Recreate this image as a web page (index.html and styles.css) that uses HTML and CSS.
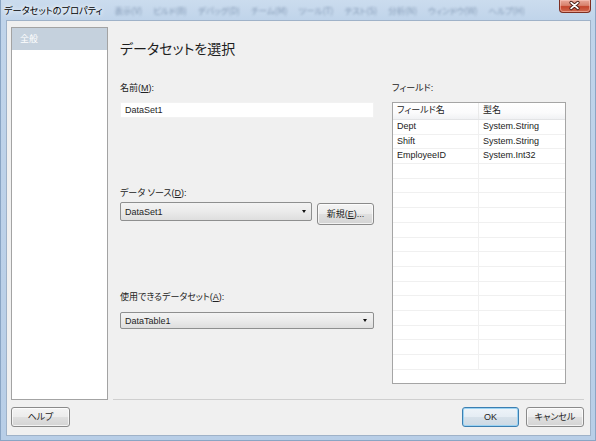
FILE: index.html
```html
<!DOCTYPE html>
<html lang="ja">
<head>
<meta charset="utf-8">
<title>データセットのプロパティ</title>
<link rel="stylesheet" href="styles.css">
</head>
<body>
<div class="window">
  <div class="titlebar">
    <span class="title">データセットのプロパティ</span>
    <div class="ghost-menu">
      <span>表示(V)</span><span>ビルド(B)</span><span>デバッグ(D)</span><span>チーム(M)</span><span>ツール(T)</span><span>テスト(S)</span><span>分析(N)</span><span>ウィンドウ(W)</span><span>ヘルプ(H)</span>
    </div>
    <div class="close">
      <svg width="32" height="13" viewBox="0 0 32 13">
        <path d="M12.5 3.5 L19.5 9.5 M19.5 3.5 L12.5 9.5" stroke="#4a1c14" stroke-width="3.6" stroke-linecap="round" fill="none"/>
        <path d="M12.5 3.5 L19.5 9.5 M19.5 3.5 L12.5 9.5" stroke="#ffffff" stroke-width="1.8" stroke-linecap="round" fill="none"/>
      </svg>
    </div>
  </div>
  <div class="client">
    <div class="main">
      <div class="nav">
        <div class="nav-item selected">全般</div>
      </div>
      <div class="content">
        <h1 class="heading">データセットを選択</h1>
        <div class="columns">
          <div class="form">
            <label class="label">名前(<u>M</u>):</label>
            <div class="textbox">DataSet1</div>
            <label class="label label-source">データ ソース(<u>D</u>):</label>
            <div class="combo-row">
              <div class="combo combo-source"><span class="combo-text">DataSet1</span><span class="arrow"></span></div>
              <button class="btn btn-new">新規(<u>E</u>)...</button>
            </div>
            <label class="label label-avail">使用できるデータセット(<u>A</u>):</label>
            <div class="combo combo-avail"><span class="combo-text">DataTable1</span><span class="arrow"></span></div>
          </div>
          <div class="fields">
            <label class="label">フィールド:</label>
            <div class="listbox">
              <div class="lrow lhead"><div class="cell">フィールド名</div><div class="cell">型名</div></div>
              <div class="lrow"><div class="cell">Dept</div><div class="cell">System.String</div></div>
              <div class="lrow"><div class="cell">Shift</div><div class="cell">System.String</div></div>
              <div class="lrow"><div class="cell">EmployeeID</div><div class="cell">System.Int32</div></div>
              <div class="lrow"><div class="cell"></div><div class="cell"></div></div>
              <div class="lrow"><div class="cell"></div><div class="cell"></div></div>
              <div class="lrow"><div class="cell"></div><div class="cell"></div></div>
              <div class="lrow"><div class="cell"></div><div class="cell"></div></div>
              <div class="lrow"><div class="cell"></div><div class="cell"></div></div>
              <div class="lrow"><div class="cell"></div><div class="cell"></div></div>
              <div class="lrow"><div class="cell"></div><div class="cell"></div></div>
              <div class="lrow"><div class="cell"></div><div class="cell"></div></div>
              <div class="lrow"><div class="cell"></div><div class="cell"></div></div>
              <div class="lrow"><div class="cell"></div><div class="cell"></div></div>
              <div class="lrow"><div class="cell"></div><div class="cell"></div></div>
              <div class="lrow"><div class="cell"></div><div class="cell"></div></div>
              <div class="lrow"><div class="cell"></div><div class="cell"></div></div>
              <div class="lrow"><div class="cell"></div><div class="cell"></div></div>
            </div>
          </div>
        </div>
      </div>
    </div>
    <div class="footer">
      <button class="btn btn-help">ヘルプ</button>
      <div class="spacer"></div>
      <button class="btn btn-ok">OK</button>
      <button class="btn btn-cancel">キャンセル</button>
    </div>
  </div>
</div>
</body>
</html>
```

FILE: styles.css
```css
* { box-sizing: border-box; }
html, body { margin: 0; padding: 0; }
body {
  width: 596px;
  height: 441px;
  overflow: hidden;
  font-family: "Liberation Sans", "Noto Sans CJK JP", sans-serif;
  font-size: 9px;
  color: #1e1e1e;
  font-feature-settings: "palt";
  background: #b9cfe7;
}
.window {
  width: 596px;
  height: 441px;
  display: flex;
  flex-direction: column;
  background: linear-gradient(180deg, #cbdcee 0px, #c0d4ea 20px, #b8cee7 100%);
  box-shadow: inset 1px 0 0 #8aa5c4, inset -1px 0 0 #8aa5c4, inset 0 -1px 0 #8aa5c4;
}
.titlebar {
  height: 20px;
  display: flex;
  align-items: center;
  padding: 0 5px 0 4px;
}
.title {
  font-family: "Noto Sans CJK JP", sans-serif;
  font-size: 9.2px;
  color: #000;
  white-space: nowrap;
  flex-shrink: 0;
  text-shadow: 0 0 4px #fff, 0 0 6px #fff;
}
.ghost-menu {
  flex: 1;
  display: flex;
  gap: 11px;
  margin-left: 12px;
  white-space: nowrap;
  font-family: "Noto Sans CJK JP", sans-serif;
  font-size: 8.5px;
  color: rgba(70, 95, 130, 0.5);
  filter: blur(1.3px);
}
.close {
  align-self: flex-start;
  flex-shrink: 0;
  width: 32px;
  height: 13px;
  border: 1px solid #7e2f22;
  border-top: none;
  border-radius: 0 0 4px 4px;
  background: linear-gradient(180deg, #e9a899 0%, #d8826d 45%, #c4452c 55%, #d06a50 100%);
  box-shadow: inset 0 0 0 1px rgba(255, 210, 200, 0.5);
  display: flex;
}
.close svg { display: block; margin: -1px 0 0 -1px; }
.client {
  flex: 1;
  margin: 0 5px 5px 6px;
  border: 1px solid #9fb2c8;
  background: #f0f0f0;
  display: flex;
  flex-direction: column;
  padding: 6px 6px 8px 4px;
}
.main {
  flex: 1;
  display: flex;
  gap: 5px;
  min-height: 0;
}
.nav {
  width: 97px;
  border: 1px solid #a3a3a3;
  background: #fff;
}
.nav-item {
  height: 22px;
  line-height: 22px;
  padding-left: 8px;
  font-family: "Noto Sans CJK JP", sans-serif;
  font-size: 9px;
}
.nav-item.selected {
  background: #c5d1dd;
  color: #fff;
}
.content {
  flex: 1;
  border-bottom: 1px solid #cfcfcf;
  padding: 12px 18px 0 7px;
}
.heading {
  margin: 0;
  font-family: "Noto Sans CJK JP", sans-serif;
  font-size: 14px;
  line-height: 18px;
  height: 18px;
  font-weight: normal;
  color: #1e1e1e;
}
.columns {
  display: flex;
  gap: 18px;
  margin-top: 25px;
}
.form {
  width: 254px;
  display: flex;
  flex-direction: column;
}
.fields {
  width: 174px;
  display: flex;
  flex-direction: column;
}
.label {
  display: block;
  height: 12px;
  line-height: 12px;
  color: #222;
  white-space: nowrap;
}
.label u { text-underline-offset: 1px; }
.textbox {
  margin-top: 8px;
  height: 16px;
  background: #fff;
  border: 1px solid #f2f2f2;
  line-height: 14px;
  padding-left: 4px;
}
.label-source { margin-top: 69px; }
.combo-row {
  margin-top: 3px;
  display: flex;
  align-items: flex-start;
  gap: 5px;
  height: 23px;
}
.combo {
  display: flex;
  align-items: center;
  border: 1px solid #8e8f8f;
  border-radius: 2px;
  background: linear-gradient(180deg, #f3f3f3 0%, #ebebeb 50%, #dedede 100%);
  padding: 0 5px 0 4px;
}
.combo-source {
  flex: 1;
  height: 19px;
}
.combo-text { flex: 1; line-height: 14px; }
.arrow {
  width: 0;
  height: 0;
  border-left: 2.5px solid transparent;
  border-right: 2.5px solid transparent;
  border-top: 3px solid #111;
}
.label-avail { margin-top: 66px; }
.combo-avail {
  margin-top: 9px;
  height: 17px;
  padding-right: 6px;
}
.btn {
  font-family: "Liberation Sans", "Noto Sans CJK JP", sans-serif;
  font-size: 9px;
  color: #1e1e1e;
  font-feature-settings: "palt";
  height: 20px;
  padding: 0;
  border: 1px solid #8a8a8a;
  border-radius: 3px;
  background: linear-gradient(180deg, #f4f4f4 0%, #ececec 48%, #dfdfdf 52%, #d4d4d4 100%);
  box-shadow: inset 0 0 0 1px rgba(255, 255, 255, 0.7);
  line-height: 16px;
}
.btn-new {
  width: 57px;
  height: 22px;
  margin-top: 1px;
}
.listbox {
  margin-top: 8px;
  height: 282px;
  border: 1px solid #a5a5a5;
  background: #fff;
  overflow: hidden;
}
.lrow {
  display: grid;
  grid-template-columns: 86px 1fr;
  height: 14.7px;
  border-bottom: 1px solid #f0f0f0;
}
.lrow .cell {
  padding-left: 4px;
  line-height: 13px;
  white-space: nowrap;
  color: #222;
}
.lrow .cell:first-child { border-right: 1px solid #f0f0f0; }
.lrow.lhead {
  height: 17px;
  background: linear-gradient(180deg, #ffffff 0%, #fbfbfc 60%, #f1f2f4 100%);
  border-bottom: 1px solid #e3e4e6;
}
.lrow.lhead .cell { line-height: 15px; color: #1e1e1e; }
.lrow.lhead .cell:first-child { border-right: 1px solid #eaeaea; }
.footer {
  margin-top: 7px;
  height: 20px;
  display: flex;
  gap: 7px;
}
.spacer { flex: 1; }
.btn-help { width: 59px; }
.btn-ok {
  width: 57px;
  border-color: #3c7fb1;
  box-shadow: inset 0 0 0 1px #9bd3f3;
  background: linear-gradient(180deg, #eef4f9 0%, #e5edf4 48%, #d6e1ea 52%, #ccd9e4 100%);
}
.btn-cancel { width: 58px; }
```
